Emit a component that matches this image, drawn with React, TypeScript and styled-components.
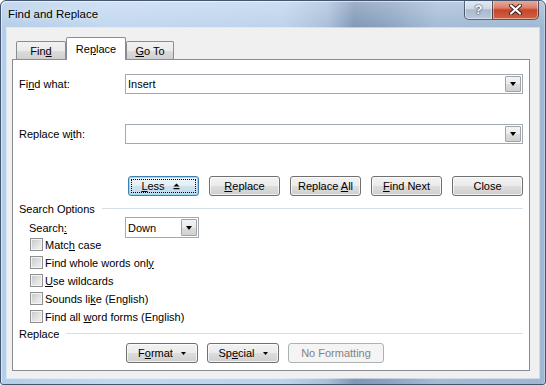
import React from "react"
import styled, { createGlobalStyle, css } from "styled-components"

const GlobalStyle = createGlobalStyle`
  html, body {
    margin: 0;
    padding: 0;
    background: #ffffff;
  }
  body {
    font-family: "Liberation Sans", Arial, sans-serif;
    font-size: 11px;
    color: #000;
  }
`

const Window = styled.div`
  width: 546px;
  height: 385px;
  box-sizing: border-box;
  display: flex;
  flex-direction: column;
  border: 1px solid #44566f;
  border-radius: 6px 6px 3px 3px;
  overflow: hidden;
  background:
    linear-gradient(180deg, rgba(255, 255, 255, 0.25) 0px, rgba(255, 255, 255, 0) 28px),
    linear-gradient(
      90deg,
      #b4cde8 0%,
      #c2d8ef 20%,
      #bcd3ec 52%,
      #a9bfd9 60%,
      #7f97b6 65%,
      #8aa2c0 71%,
      #a4bbd6 80%,
      #9fb7d3 100%
    );
  box-shadow: inset 1px 1px 0 rgba(255, 255, 255, 0.55), inset -1px 0 0 rgba(255, 255, 255, 0.3);
`

const TitleBar = styled.div`
  height: 27px;
  flex: none;
  display: flex;
  align-items: flex-start;
`

const Title = styled.div`
  padding-left: 7px;
  line-height: 27px;
  font-size: 11.5px;
  color: #000;
  text-shadow: 0 0 6px rgba(255, 255, 255, 0.9);
`

const CaptionButtons = styled.div`
  margin-left: auto;
  margin-right: 6px;
  margin-top: -1px;
  display: flex;
`

const CaptionButton = styled.div<{ $kind: "help" | "close" }>`
  height: 20px;
  box-sizing: border-box;
  display: flex;
  align-items: center;
  justify-content: center;
  border: 1px solid rgba(40, 55, 80, 0.75);
  border-top: none;
  box-shadow: inset 0 0 0 1px rgba(255, 255, 255, 0.45);
  ${(p) =>
    p.$kind === "help"
      ? css`
          width: 28px;
          border-right: none;
          border-radius: 0 0 0 5px;
          background: linear-gradient(180deg, #e4ecf5 0%, #ccd9e7 45%, #a8bacd 52%, #b9c9da 100%);
          color: #fff;
          font-weight: bold;
          font-size: 13px;
          text-shadow: 0 0 2px #2c3e55, 0 0 1px #2c3e55;
        `
      : css`
          width: 47px;
          border-radius: 0 0 5px 0;
          background: linear-gradient(180deg, #eab0a2 0%, #d98068 42%, #c6452c 52%, #d2613f 100%);
        `}
`

const Client = styled.div`
  flex: 1;
  margin: 0 6px 6px 6px;
  background: #f0f0f0;
  box-sizing: border-box;
  padding: 9px 9px 7px 5px;
  display: flex;
  flex-direction: column;
  box-shadow: 0 0 0 1px rgba(255, 255, 255, 0.5);
`

const TabStrip = styled.div`
  height: 23px;
  flex: none;
  display: flex;
  align-items: flex-end;
  padding-left: 4px;
  margin-bottom: -1px;
  position: relative;
  z-index: 1;
`

const Tab = styled.div<{ $active?: boolean; $w: number }>`
  width: ${(p) => p.$w}px;
  box-sizing: border-box;
  display: flex;
  align-items: center;
  justify-content: center;
  border: 1px solid #898c95;
  border-bottom: none;
  border-radius: 2px 2px 0 0;
  ${(p) =>
    p.$active
      ? css`
          height: 23px;
          background: #fff;
          padding-bottom: 1px;
        `
      : css`
          height: 18px;
          margin-bottom: 1px;
          padding-top: 1px;
          background: linear-gradient(180deg, #f2f2f2 0%, #ebebeb 50%, #dddddd 51%, #cfcfcf 100%);
        `}
`

const Panel = styled.div`
  flex: 1;
  box-sizing: border-box;
  background: #fff;
  border: 1px solid #898c95;
  padding: 14px 6px 0 6px;
  display: flex;
  flex-direction: column;
`

const Ak = styled.span`
  text-decoration: underline;
  text-underline-offset: 1px;
`

const FieldRow = styled.div<{ $mb?: number; $indent?: number; $h?: number; $mt?: number }>`
  display: flex;
  align-items: center;
  height: ${(p) => p.$h ?? 20}px;
  margin-left: ${(p) => p.$indent ?? 0}px;
  margin-top: ${(p) => p.$mt ?? 0}px;
  margin-bottom: ${(p) => p.$mb ?? 0}px;
  flex: none;
`

const FieldLabel = styled.div<{ $w: number }>`
  width: ${(p) => p.$w}px;
  flex: none;
`

const Combo = styled.div<{ $w?: number }>`
  ${(p) => (p.$w ? `width: ${p.$w}px; flex: none;` : "flex: 1;")}
  height: 100%;
  box-sizing: border-box;
  border: 1px solid #a3a9b1;
  background: #fff;
  display: flex;
  align-items: stretch;
  padding: 1px;
`

const ComboText = styled.div`
  flex: 1;
  display: flex;
  align-items: center;
  padding-left: 1px;
`

const DropButton = styled.div`
  width: 16px;
  flex: none;
  box-sizing: border-box;
  border: 1px solid #a0a3a8;
  border-radius: 1px;
  background: linear-gradient(180deg, #f3f3f3 0%, #ebebeb 50%, #dddddd 51%, #d0d0d0 100%);
  display: flex;
  align-items: center;
  justify-content: center;
  &::after {
    content: "";
    width: 0;
    height: 0;
    border-left: 3.5px solid transparent;
    border-right: 3.5px solid transparent;
    border-top: 4px solid #000;
  }
`

const ButtonRow = styled.div<{ $indent: number; $gap: number; $mt?: number; $mb?: number }>`
  display: flex;
  gap: ${(p) => p.$gap}px;
  margin-left: ${(p) => p.$indent}px;
  margin-top: ${(p) => p.$mt ?? 0}px;
  margin-bottom: ${(p) => p.$mb ?? 0}px;
  height: 20px;
  flex: none;
`

const Button = styled.div<{ $w: number; $focused?: boolean; $disabled?: boolean }>`
  width: ${(p) => p.$w}px;
  height: 20px;
  box-sizing: border-box;
  border: 1px solid #707070;
  border-radius: 3px;
  background: linear-gradient(180deg, #f2f2f2 0%, #ebebeb 50%, #dddddd 51%, #cfcfcf 100%);
  box-shadow: inset 0 0 0 1px rgba(255, 255, 255, 0.7);
  display: flex;
  align-items: center;
  justify-content: center;
  gap: 8px;
  position: relative;
  ${(p) =>
    p.$focused &&
    css`
      border-color: #3c7fb1;
      background: linear-gradient(180deg, #eef6fb 0%, #e2eef6 50%, #cfe2ee 51%, #c2d9e7 100%);
      box-shadow: inset 0 0 0 1px #9fd8f2;
      padding-right: 6px;
      &::before {
        content: "";
        position: absolute;
        inset: 2px;
        border: 1px dotted #000;
      }
    `}
  ${(p) =>
    p.$disabled &&
    css`
      border-color: #adb2b5;
      background: #f4f4f4;
      box-shadow: none;
      color: #838383;
    `}
`

const SectionHeader = styled.div<{ $mt: number }>`
  display: flex;
  align-items: center;
  gap: 7px;
  height: 13px;
  margin-top: ${(p) => p.$mt}px;
  flex: none;
  &::after {
    content: "";
    flex: 1;
    height: 1px;
    background: #d5dfe5;
  }
`

const CheckList = styled.div`
  display: flex;
  flex-direction: column;
  gap: 5px;
  margin-left: 11px;
  flex: none;
`

const CheckRow = styled.div`
  display: flex;
  align-items: center;
  gap: 2px;
  height: 13px;
`

const CheckBox = styled.span`
  width: 13px;
  height: 13px;
  box-sizing: border-box;
  flex: none;
  border: 1px solid #8e8f8f;
  background: linear-gradient(135deg, #c3c6ca 0%, #e4e4e5 60%, #f1f1f1 100%);
  box-shadow: inset 0 0 0 1px #f4f4f4;
`

const UpMark = () => (
  <svg width="7" height="7" viewBox="0 0 7 7">
    <path d="M3.5 0.5 L6.5 3.5 L0.5 3.5 Z" fill="#000" />
    <rect x="0.5" y="5" width="6" height="1.2" fill="#000" />
  </svg>
)

const CloseMark = () => (
  <svg width="13" height="11" viewBox="0 0 13 11">
    <path d="M2 1.5 L11 9.5 M11 1.5 L2 9.5" stroke="#3a2020" strokeWidth="4" strokeLinecap="round" />
    <path d="M2 1.5 L11 9.5 M11 1.5 L2 9.5" stroke="#fff" strokeWidth="2.2" strokeLinecap="round" />
  </svg>
)

const options = [
  <>
    Matc<Ak>h</Ak> case
  </>,
  <>
    Find whole words onl<Ak>y</Ak>
  </>,
  <>
    <Ak>U</Ak>se wildcards
  </>,
  <>
    Sounds li<Ak>k</Ak>e (English)
  </>,
  <>
    Find all <Ak>w</Ak>ord forms (English)
  </>,
]

export default function App() {
  return (
    <>
      <GlobalStyle />
      <Window>
        <TitleBar>
          <Title>Find and Replace</Title>
          <CaptionButtons>
            <CaptionButton $kind="help">?</CaptionButton>
            <CaptionButton $kind="close">
              <CloseMark />
            </CaptionButton>
          </CaptionButtons>
        </TitleBar>
        <Client>
          <TabStrip>
            <Tab $w={50}>
              Fin<Ak>d</Ak>
            </Tab>
            <Tab $w={60} $active>
              Re<Ak>p</Ak>lace
            </Tab>
            <Tab $w={48}>
              <Ak>G</Ak>o To
            </Tab>
          </TabStrip>
          <Panel>
            <FieldRow $mb={30}>
              <FieldLabel $w={106}>
                Fi<Ak>n</Ak>d what:
              </FieldLabel>
              <Combo>
                <ComboText>Insert</ComboText>
                <DropButton />
              </Combo>
            </FieldRow>
            <FieldRow $mb={32}>
              <FieldLabel $w={106}>
                Replace w<Ak>i</Ak>th:
              </FieldLabel>
              <Combo>
                <ComboText />
                <DropButton />
              </Combo>
            </FieldRow>
            <ButtonRow $indent={109} $gap={10}>
              <Button $w={71} $focused>
                <span>
                  <Ak>L</Ak>ess
                </span>
                <UpMark />
              </Button>
              <Button $w={71}>
                <span>
                  <Ak>R</Ak>eplace
                </span>
              </Button>
              <Button $w={71}>
                <span>
                  Replace <Ak>A</Ak>ll
                </span>
              </Button>
              <Button $w={71}>
                <span>
                  <Ak>F</Ak>ind Next
                </span>
              </Button>
              <Button $w={71}>Close</Button>
            </ButtonRow>

            <SectionHeader $mt={6}>Search Options</SectionHeader>
            <FieldRow $indent={10} $h={21} $mt={2}>
              <FieldLabel $w={96}>
                Search<Ak>:</Ak>
              </FieldLabel>
              <Combo $w={74}>
                <ComboText>Down</ComboText>
                <DropButton />
              </Combo>
            </FieldRow>
            <CheckList>
              {options.map((label, i) => (
                <CheckRow key={i}>
                  <CheckBox />
                  <span>{label}</span>
                </CheckRow>
              ))}
            </CheckList>

            <SectionHeader $mt={4}>Replace</SectionHeader>
            <ButtonRow $indent={107} $gap={9} $mt={3}>
              <Button $w={72}>
                <span>
                  F<Ak>o</Ak>rmat
                </span>
                <svg width="5" height="3" viewBox="0 0 5 3">
                  <path d="M0 0 L5 0 L2.5 3 Z" fill="#000" />
                </svg>
              </Button>
              <Button $w={72}>
                <span>
                  Sp<Ak>e</Ak>cial
                </span>
                <svg width="5" height="3" viewBox="0 0 5 3">
                  <path d="M0 0 L5 0 L2.5 3 Z" fill="#000" />
                </svg>
              </Button>
              <Button $w={96} $disabled>
                No Formatting
              </Button>
            </ButtonRow>
          </Panel>
        </Client>
      </Window>
    </>
  )
}
